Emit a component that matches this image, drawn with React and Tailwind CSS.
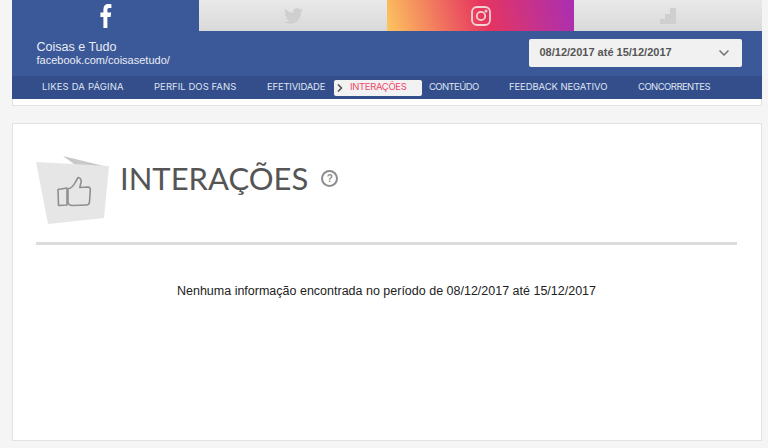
import { ChevronDown, ChevronRight } from "lucide-react";

const sans = "font-['Liberation_Sans',Arial,sans-serif]";
const navFont = "font-['Inter',sans-serif]";

const ThumbIcon = () => (
  <svg width="36" height="32" viewBox="0 0 36 32" fill="none" stroke="#8f8f8f" strokeWidth="1.6" strokeLinejoin="round">
    <path d="M1 13.5 L10 12 V29 L1.5 29.5 Z" />
    <path d="M11 13 C15 12 17 9 18.5 6 L21 1.5 C23.5 1.5 24.5 4 24 6.5 L22.8 11.5 L31 11 C32.8 11 33.5 12.5 33.3 14 L32.5 26 C32.3 28 31 29 29.5 29 L15 29.5 C13 29.5 12 28.5 11 27.5 Z" />
  </svg>
);

export default function App() {
  return (
    <div className={`h-[448px] w-[768px] overflow-hidden bg-[#f5f5f5] pl-3 ${sans}`}>
      <div className="w-[750px] border-x border-b border-[#e2e2e2] bg-white pb-[6px]">
        <div className="-mx-px">
          {/* tabs */}
          <div className="flex h-[31px]">
            <div className="flex w-[187px] items-center justify-center bg-[#3b5998]">
              <svg width="12" height="24" viewBox="0 0 12 24" fill="#ffffff">
                <path d="M3.4 24V13H0.4V8.6H3.4V5.4C3.4 1.8 5.4 0 8.4 0C9.9 0 11 0.1 11.4 0.2V4.1H9.3C7.7 4.1 7.4 4.9 7.4 6V8.6H11.2L10.6 13H7.4V24Z" />
              </svg>
            </div>
            <div className="flex w-[188px] items-center justify-center bg-gradient-to-b from-[#e9e9e9] to-[#d9d9d9]">
              <svg width="19" height="16" viewBox="0 0 24 20" fill="#cfcfcf">
                <path d="M24 2.4a9.8 9.8 0 0 1-2.8.8A4.9 4.9 0 0 0 23.3.5a9.8 9.8 0 0 1-3.1 1.2A4.9 4.9 0 0 0 11.8 6.200A13.900 13.900 0 0 1 1.700.9a4.900 4.900 0 0 0 1.500 6.500 4.900 4.900 0 0 1-2.200-.6v.1a4.900 4.900 0 0 0 3.900 4.800 4.900 4.900 0 0 1-2.200.1 4.900 4.900 0 0 0 4.600 3.400A9.900 9.900 0 0 1 0 17.700a13.900 13.900 0 0 0 7.500 2.200c9 0 14-7.500 14-14v-.6A10 10 0 0 0 24 2.400z" />
              </svg>
            </div>
            <div className="flex w-[187px] items-center justify-center bg-[linear-gradient(75deg,#fdc55e_0%,#f0705f_30%,#e6355f_52%,#a92fb4_100%)]">
              <svg width="20" height="20" viewBox="0 0 20 20" fill="none" stroke="#f3d3d3" strokeWidth="1.8">
                <rect x="1" y="1" width="18" height="18" rx="5" />
                <circle cx="10" cy="10" r="4.200" />
                <circle cx="15" cy="5" r="0.600" fill="#f3d3d3" />
              </svg>
            </div>
            <div className="flex w-[188px] items-center justify-center bg-gradient-to-b from-[#e9e9e9] to-[#d9d9d9]">
              <svg width="16" height="16" viewBox="0 0 16 16" fill="#cfcfcf">
                <path d="M10 0H16V16H0V11H5V6H10Z" />
              </svg>
            </div>
          </div>

          {/* page info and date */}
          <div className="flex h-[45px] items-center justify-between bg-[#3b5998] pb-[2px] pl-[24.500px] pr-5">
            <div className="flex flex-col text-[#e9edf5]">
              <span className="text-[12.500px] leading-[14px]">Coisas e Tudo</span>
              <span className="text-[11px] leading-[12px]">facebook.com/coisasetudo/</span>
            </div>
            <div className="flex h-7 w-[213px] items-center justify-between rounded-[2px] bg-[#f1f1f1] pl-[10.500px] pr-[10px]">
              <span className="text-[11px] font-bold text-[#555555]">08/12/2017 até 15/12/2017</span>
              <ChevronDown size={16} strokeWidth={2.500} className="text-[#777777]" />
            </div>
          </div>

          {/* nav */}
          <div className={`flex h-[23px] items-center bg-[#344e8c] text-[9.500px] text-[#dfe5f1] ${navFont}`}>
            <span className="ml-[30px] w-[112px] whitespace-nowrap tracking-[0.15px]">LIKES DA PÁGINA</span>
            <span className="w-[113px] whitespace-nowrap tracking-[0.05px]">PERFIL DOS FANS</span>
            <span className="w-[67px] whitespace-nowrap tracking-[-0.2px]">EFETIVIDADE</span>
            <span className="flex h-[16px] w-[88px] items-center whitespace-nowrap rounded-[2px] bg-[#f2f2f2] tracking-[-0.35px] text-[#f0476a]">
              <ChevronRight size={12} strokeWidth={3.500} className="mr-[4px] text-[#555555]" />
              INTERAÇÕES
            </span>
            <span className="ml-[7px] w-[80px] whitespace-nowrap tracking-[-0.6px]">CONTEÚDO</span>
            <span className="w-[129px] whitespace-nowrap tracking-[-0.1px]">FEEDBACK NEGATIVO</span>
            <span className="whitespace-nowrap tracking-[-0.55px]">CONCORRENTES</span>
          </div>
        </div>
      </div>

      {/* content card */}
      <div className="mt-[17px] h-[318px] w-[750px] border border-[#e2e2e2] bg-white pl-[23px] pr-6 pt-[31px]">
        <div className="flex h-[87px] items-start border-b-[3px] border-[#dcdcdc] box-content">
          <div className="relative h-[69px] w-[73px] shrink-0">
            <svg className="absolute left-0 top-0" width="73" height="69" viewBox="0 0 73 69">
              <path d="M27 1 L72 12 L42 12 Z" fill="#c9c9c9" />
              <path d="M0 7 L73 11 L68 63 L12 69 Z" fill="#e6e6e6" />
            </svg>
            <div className="absolute left-[21px] top-[21px]">
              <ThumbIcon />
            </div>
          </div>
          <h1 className="ml-[11px] mt-[2px] font-['Lato',sans-serif] text-[31px] font-normal leading-[42px] text-[#555555]">
            INTERAÇÕES
          </h1>
          <span className="ml-[13px] mt-[15px] flex h-[17px] w-[17px] items-center justify-center rounded-full border-2 border-[#8d8d8d] text-[10px] font-bold text-[#8d8d8d]">
            ?
          </span>
        </div>
        <p className="mt-[39px] text-center text-[12.500px] leading-[14px] text-[#222222]">
          Nenhuma informação encontrada no período de 08/12/2017 até 15/12/2017
        </p>
      </div>
    </div>
  );
}
